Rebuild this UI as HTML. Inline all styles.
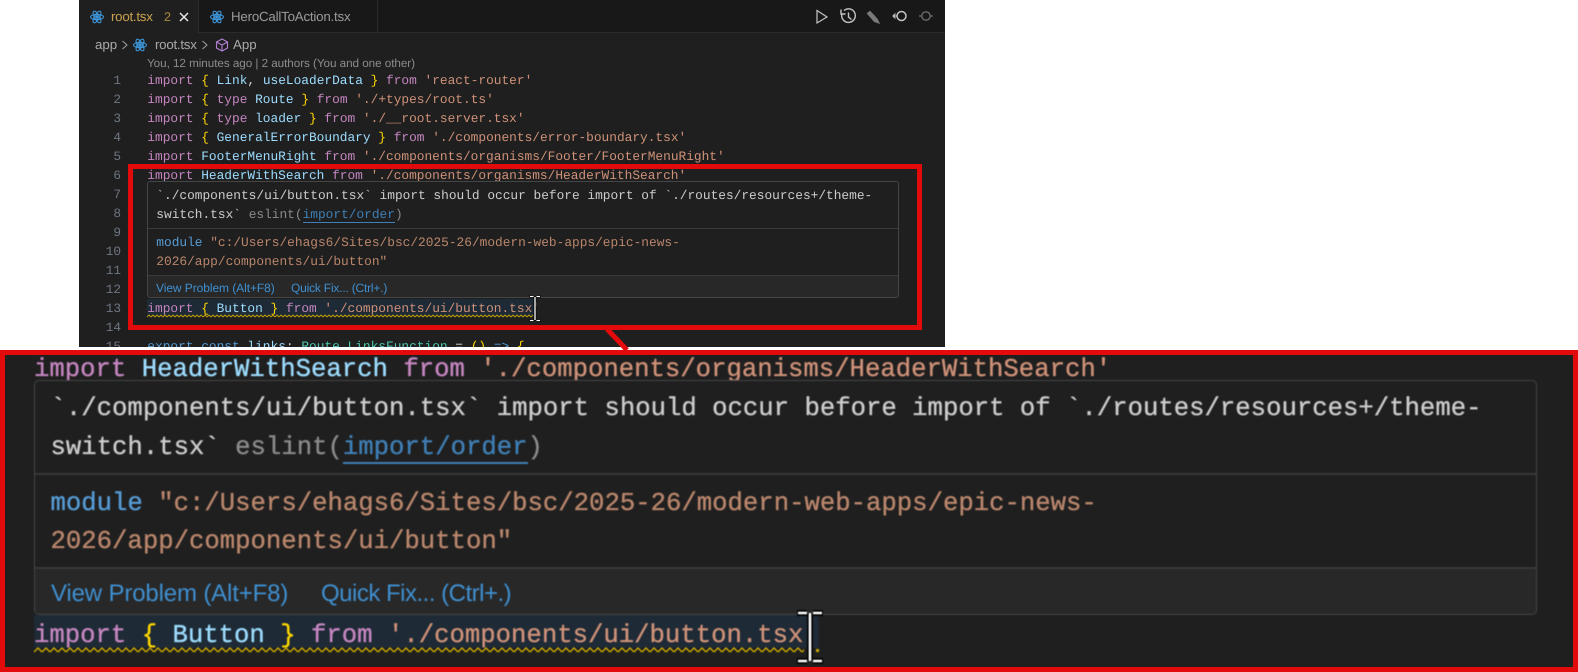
<!DOCTYPE html>
<html><head><meta charset="utf-8">
<style>
html,body{margin:0;padding:0;background:#fff}
body{width:1578px;height:672px;position:relative;overflow:hidden;text-rendering:geometricPrecision}
div,span.a,svg.a{position:absolute}
.ed{left:79px;top:0;width:866px;height:346.5px;background:#1f1f1f;overflow:hidden;filter:blur(.3px)}
.m{font-family:"Liberation Mono",monospace;white-space:pre;color:#d4d4d4}
.s{font-family:"Liberation Sans",sans-serif;white-space:pre}
.c{font-size:12.84px;line-height:19px;height:19px;left:68.3px}
.n{font-size:12.75px;line-height:19px;height:19px;left:10px;width:32px;text-align:right;color:#6e7681;font-family:"Liberation Mono",monospace}
.k{color:#c586c0}.i{color:#9cdcfe}.b{color:#ffd700}.t{color:#ce9178}.g{color:#4ec9b0}.u{color:#569cd6}.p{color:#d4d4d4}
.h{font-size:12.84px;line-height:19px;height:19px;left:77.3px;color:#cccccc}
.big{left:0;top:350px;width:1578px;height:322px;background:#1f1f1f;overflow:hidden}
.bc{font-size:25.65px;line-height:38px;height:38px;left:34px;-webkit-text-stroke:.35px}
.bh{font-size:25.65px;line-height:38px;height:38px;left:50.5px;color:#cccccc;-webkit-text-stroke:.35px}
.dim{color:#8a8a8a}
.lnk{color:#3f8fd0}
.bt{filter:blur(.45px)}
</style></head><body>

<div class="ed">
  <div style="left:0;top:0;width:866px;height:32px;background:#181818;border-bottom:1px solid #2b2b2b"></div>
  <div style="left:0;top:0;width:119px;height:33px;background:#1f1f1f;border-right:1px solid #2b2b2b"></div>
  <div style="left:120px;top:0;width:178px;height:32px;border-right:1px solid #2b2b2b"></div>

  <svg class="a" style="left:11px;top:10px" width="14" height="14" viewBox="0 0 14 14" fill="none" stroke="#3d94d6" stroke-width="1.1"><ellipse cx="7" cy="7" rx="6.5" ry="2.6"/><ellipse cx="7" cy="7" rx="6.5" ry="2.6" transform="rotate(60 7 7)"/><ellipse cx="7" cy="7" rx="6.5" ry="2.6" transform="rotate(120 7 7)"/><circle cx="7" cy="7" r="1.3" fill="#3d94d6"/></svg>
  <span class="a s" style="left:32px;top:9px;font-size:13.3px;line-height:16px;letter-spacing:-.25px;color:#c9a24f">root.tsx</span>
  <span class="a s" style="left:85px;top:9px;font-size:12.5px;line-height:16px;color:#b08d3c">2</span>
  <svg class="a" style="left:100px;top:12px" width="10" height="10" viewBox="0 0 10 10" stroke="#e8e8e8" stroke-width="1.5" fill="none"><path d="M1 1L9 9M9 1L1 9"/></svg>

  <svg class="a" style="left:131px;top:10px" width="14" height="14" viewBox="0 0 14 14" fill="none" stroke="#3d94d6" stroke-width="1.1"><ellipse cx="7" cy="7" rx="6.5" ry="2.6"/><ellipse cx="7" cy="7" rx="6.5" ry="2.6" transform="rotate(60 7 7)"/><ellipse cx="7" cy="7" rx="6.5" ry="2.6" transform="rotate(120 7 7)"/><circle cx="7" cy="7" r="1.3" fill="#3d94d6"/></svg>
  <span class="a s" style="left:152px;top:9px;font-size:13.3px;line-height:16px;letter-spacing:-.2px;color:#9a9a9a">HeroCallToAction.tsx</span>

  <svg class="a" style="left:733px;top:8px" width="133" height="18" viewBox="0 0 133 18" fill="none" stroke="#c4c4c4" stroke-width="1.2">
    <path d="M5 2.500L15 9L5 15Z"/>
    <path d="M31 3A6.800 6.800 0 1 1 30 14.500M30.500 3A6.800 6.800 0 0 0 30 14.500" stroke="none"/>
    <path d="M32 2.500A6.800 6.800 0 1 1 29.800 6.500M29 1.500V6H33.500M36.500 4.500V9L39.500 11.500" stroke-width="1.400"/>
    <path d="M55.500 5.500L58 3.500L65 11L67 15L62.500 13.500Z" fill="#7a7a7a" stroke="#7a7a7a"/>
    <circle cx="89.500" cy="8" r="4.500" stroke-width="1.500"/><path d="M85 8H81M83.500 5.500L81 8L83.500 10.500"/>
    <circle cx="114" cy="8" r="4.200" stroke="#6b6b6b" stroke-width="1.400"/><path d="M110 8H107M118 8H121" stroke="#6b6b6b"/>
  </svg>

  <span class="a s" style="left:16px;top:37px;font-size:13.3px;line-height:16px;color:#a9a9a9">app</span>
  <svg class="a" style="left:42px;top:40px" width="8" height="10" viewBox="0 0 8 10" fill="none" stroke="#a0a0a0"><path d="M1.5 1L6 5L1.5 9"/></svg>
  <svg class="a" style="left:54px;top:38px" width="14" height="14" viewBox="0 0 14 14" fill="none" stroke="#3d94d6" stroke-width="1.1"><ellipse cx="7" cy="7" rx="6.5" ry="2.6"/><ellipse cx="7" cy="7" rx="6.5" ry="2.6" transform="rotate(60 7 7)"/><ellipse cx="7" cy="7" rx="6.5" ry="2.6" transform="rotate(120 7 7)"/><circle cx="7" cy="7" r="1.3" fill="#3d94d6"/></svg>
  <span class="a s" style="left:76px;top:37px;font-size:13.3px;line-height:16px;letter-spacing:-.25px;color:#a9a9a9">root.tsx</span>
  <svg class="a" style="left:122px;top:40px" width="8" height="10" viewBox="0 0 8 10" fill="none" stroke="#a0a0a0"><path d="M1.5 1L6 5L1.5 9"/></svg>
  <svg class="a" style="left:136px;top:38px" width="14" height="14" viewBox="0 0 14 14" fill="none" stroke="#b180d7" stroke-width="1.1"><path d="M7 1L12.5 4V10L7 13L1.5 10V4ZM1.5 4L7 7L12.5 4M7 7V13"/></svg>
  <span class="a s" style="left:154px;top:37px;font-size:13.3px;line-height:16px;color:#a9a9a9">App</span>

  <span class="a s" style="left:68px;top:57px;font-size:11.7px;line-height:14px;letter-spacing:-.05px;color:#8c8c8c">You, 12 minutes ago | 2 authors (You and one other)</span>

  <div class="n" style="top:71px">1</div><div class="n" style="top:90px">2</div><div class="n" style="top:109px">3</div><div class="n" style="top:128px">4</div><div class="n" style="top:147px">5</div><div class="n" style="top:166px">6</div><div class="n" style="top:185px">7</div><div class="n" style="top:204px">8</div><div class="n" style="top:223px">9</div><div class="n" style="top:242px">10</div><div class="n" style="top:261px">11</div><div class="n" style="top:280px">12</div><div class="n" style="top:299px">13</div><div class="n" style="top:318px">14</div><div class="n" style="top:337px">15</div>

  <div class="m c" style="top:71px"><span class="k">import</span> <span class="b">{</span> <span class="i">Link</span>, <span class="i">useLoaderData</span> <span class="b">}</span> <span class="k">from</span> <span class="t">'react-router'</span></div>
  <div class="m c" style="top:90px"><span class="k">import</span> <span class="b">{</span> <span class="k">type</span> <span class="i">Route</span> <span class="b">}</span> <span class="k">from</span> <span class="t">'./+types/root.ts'</span></div>
  <div class="m c" style="top:109px"><span class="k">import</span> <span class="b">{</span> <span class="k">type</span> <span class="i">loader</span> <span class="b">}</span> <span class="k">from</span> <span class="t">'./__root.server.tsx'</span></div>
  <div class="m c" style="top:128px"><span class="k">import</span> <span class="b">{</span> <span class="i">GeneralErrorBoundary</span> <span class="b">}</span> <span class="k">from</span> <span class="t">'./components/error-boundary.tsx'</span></div>
  <div class="m c" style="top:147px"><span class="k">import</span> <span class="i">FooterMenuRight</span> <span class="k">from</span> <span class="t">'./components/organisms/Footer/FooterMenuRight'</span></div>
  <div class="m c" style="top:166px"><span class="k">import</span> <span class="i">HeaderWithSearch</span> <span class="k">from</span> <span class="t">'./components/organisms/HeaderWithSearch'</span></div>
  <div style="left:68px;top:299px;width:390px;height:17px;background:#1e2a35"></div>
  <div class="m c" style="top:299px"><span class="k">import</span> <span class="b">{</span> <span class="i">Button</span> <span class="b">}</span> <span class="k">from</span> <span class="t">'./components/ui/button.tsx'</span></div>
  <svg class="a" style="left:68px;top:314px" width="386" height="4"><defs><pattern id="sq1" width="4" height="4" patternUnits="userSpaceOnUse"><path d="M0 3L2 1L4 3" fill="none" stroke="#c9a800" stroke-width=".9"/></pattern></defs><rect width="386" height="4" fill="url(#sq1)"/></svg>
  <div class="m c" style="top:337px"><span class="u">export</span> <span class="u">const</span> <span class="i">links</span>: <span class="g">Route</span>.<span class="g">LinksFunction</span> = <span class="b">()</span> <span class="u">=&gt;</span> <span class="b">{</span></div>

  <!-- hover -->
  <div style="left:68px;top:181px;width:752px;height:117px;background:#1f1f1f;border:1px solid #454545;border-radius:3px;box-sizing:border-box;overflow:hidden">
    <div style="left:0;top:46px;width:100%;height:1px;background:#3a3a3a"></div>
    <div style="left:0;top:93px;width:100%;height:22px;background:#282828;border-top:1px solid #3a3a3a"></div>
  </div>
  <div class="m h" style="top:186px">`./components/ui/button.tsx` import should occur before import of `./routes/resources+/theme-</div>
  <div class="m h" style="top:205px">switch.tsx` <span class="dim">eslint(<span style="color:#3f7fb5;border-bottom:1px solid #3f7fb5">import/order</span>)</span></div>
  <div class="m h" style="top:233px"><span class="u">module</span> <span class="t" style="color:#b9866c">"c:/Users/ehags6/Sites/bsc/2025-26/modern-web-apps/epic-news-</span></div>
  <div class="m h" style="top:252px"><span class="t" style="color:#b9866c">2026/app/components/ui/button"</span></div>
  <span class="a s lnk" style="left:77px;top:281px;font-size:12px;line-height:14px;letter-spacing:-.07px">View Problem (Alt+F8)</span>
  <span class="a s lnk" style="left:212px;top:281px;font-size:12px;line-height:14px;letter-spacing:-.2px">Quick Fix... (Ctrl+.)</span>

  <!-- red frame -->
  <div style="left:49px;top:164px;width:794px;height:166px;border:5px solid #e20a0a;box-sizing:border-box"></div>
  <svg class="a" style="left:449px;top:295px" width="14" height="28" viewBox="0 0 14 28"><path d="M1.5 1.5H5.500M8.500 1.500H12.500M7 1.500V25.500M1.500 25.500H5.500M8.500 25.500H12.500" stroke="#000" stroke-width="3" fill="none"/><path d="M2 1.500H5.500M8.500 1.500H12M7 2V25M2 25.500H5.500M8.500 25.500H12" stroke="#fff" stroke-width="1.300" fill="none"/></svg>
</div>

<svg class="a" style="left:600px;top:328px" width="40" height="24"><path d="M7 1L27 22" stroke="#e20a0a" stroke-width="5" fill="none"/></svg>

<div class="big">
  <div class="bt" style="left:0;top:0;width:1578px;height:322px">
  <div style="left:33.500px;top:265px;width:785.500px;height:33px;background:#1e2a35"></div>
  <div class="m bc" style="top:1px"><span class="k">import</span> <span class="i">HeaderWithSearch</span> <span class="k">from</span> <span class="t">'./components/organisms/HeaderWithSearch'</span></div>
  <div style="left:33.500px;top:30px;width:1503px;height:234.500px;background:#1f1f1f;border:1.500px solid #454545;border-radius:5px;box-sizing:border-box;overflow:hidden">
    <div style="left:0;top:92px;width:100%;height:2px;background:#383838"></div>
    <div style="left:0;top:185.500px;width:100%;height:48px;background:#282828;border-top:2px solid #383838"></div>
  </div>
  <div class="m bh" style="top:40px">`./components/ui/button.tsx` import should occur before import of `./routes/resources+/theme-</div>
  <div class="m bh" style="top:79px">switch.tsx` <span class="dim">eslint(<span style="color:#3f7fb5;border-bottom:2px solid #3f7fb5">import/order</span>)</span></div>
  <div class="m bh" style="top:135px"><span class="u">module</span> <span class="t" style="color:#b9866c">"c:/Users/ehags6/Sites/bsc/2025-26/modern-web-apps/epic-news-</span></div>
  <div class="m bh" style="top:173px"><span class="t" style="color:#b9866c">2026/app/components/ui/button"</span></div>
  <span class="a s lnk" style="left:51px;top:229px;font-size:24px;line-height:30px;letter-spacing:-.15px">View Problem (Alt+F8)</span>
  <span class="a s lnk" style="left:321px;top:229px;font-size:24px;line-height:30px;letter-spacing:-.5px">Quick Fix... (Ctrl+.)</span>
  <div class="m bc" style="top:267px"><span class="k">import</span> <span class="b">{</span> <span class="i">Button</span> <span class="b">}</span> <span class="k">from</span> <span class="t">'./components/ui/button.tsx'</span></div>
  <svg class="a" style="left:33.500px;top:296px" width="770" height="8"><defs><pattern id="sq2" width="8" height="8" patternUnits="userSpaceOnUse"><path d="M0 6L4 2L8 6" fill="none" stroke="#c9a800" stroke-width="1.500"/></pattern></defs><rect width="770" height="8" fill="url(#sq2)"/></svg>
  <div style="left:815.500px;top:299px;width:3px;height:3px;background:#c9a800"></div>
  <svg class="a" style="left:794px;top:258px" width="32" height="58" viewBox="0 0 32 58"><path d="M3 5H13M19 5H29M16 5V53M3 53H13M19 53H29" stroke="#000" stroke-width="6" fill="none"/><path d="M4 5H13M19 5H28M16 5V53M4 53H13M19 53H28" stroke="#fff" stroke-width="2.600" fill="none"/></svg>
  </div>
  <div style="left:0;top:0;width:1578px;height:322px;border:5px solid #e20a0a;box-sizing:border-box"></div>
</div>
</body></html>
